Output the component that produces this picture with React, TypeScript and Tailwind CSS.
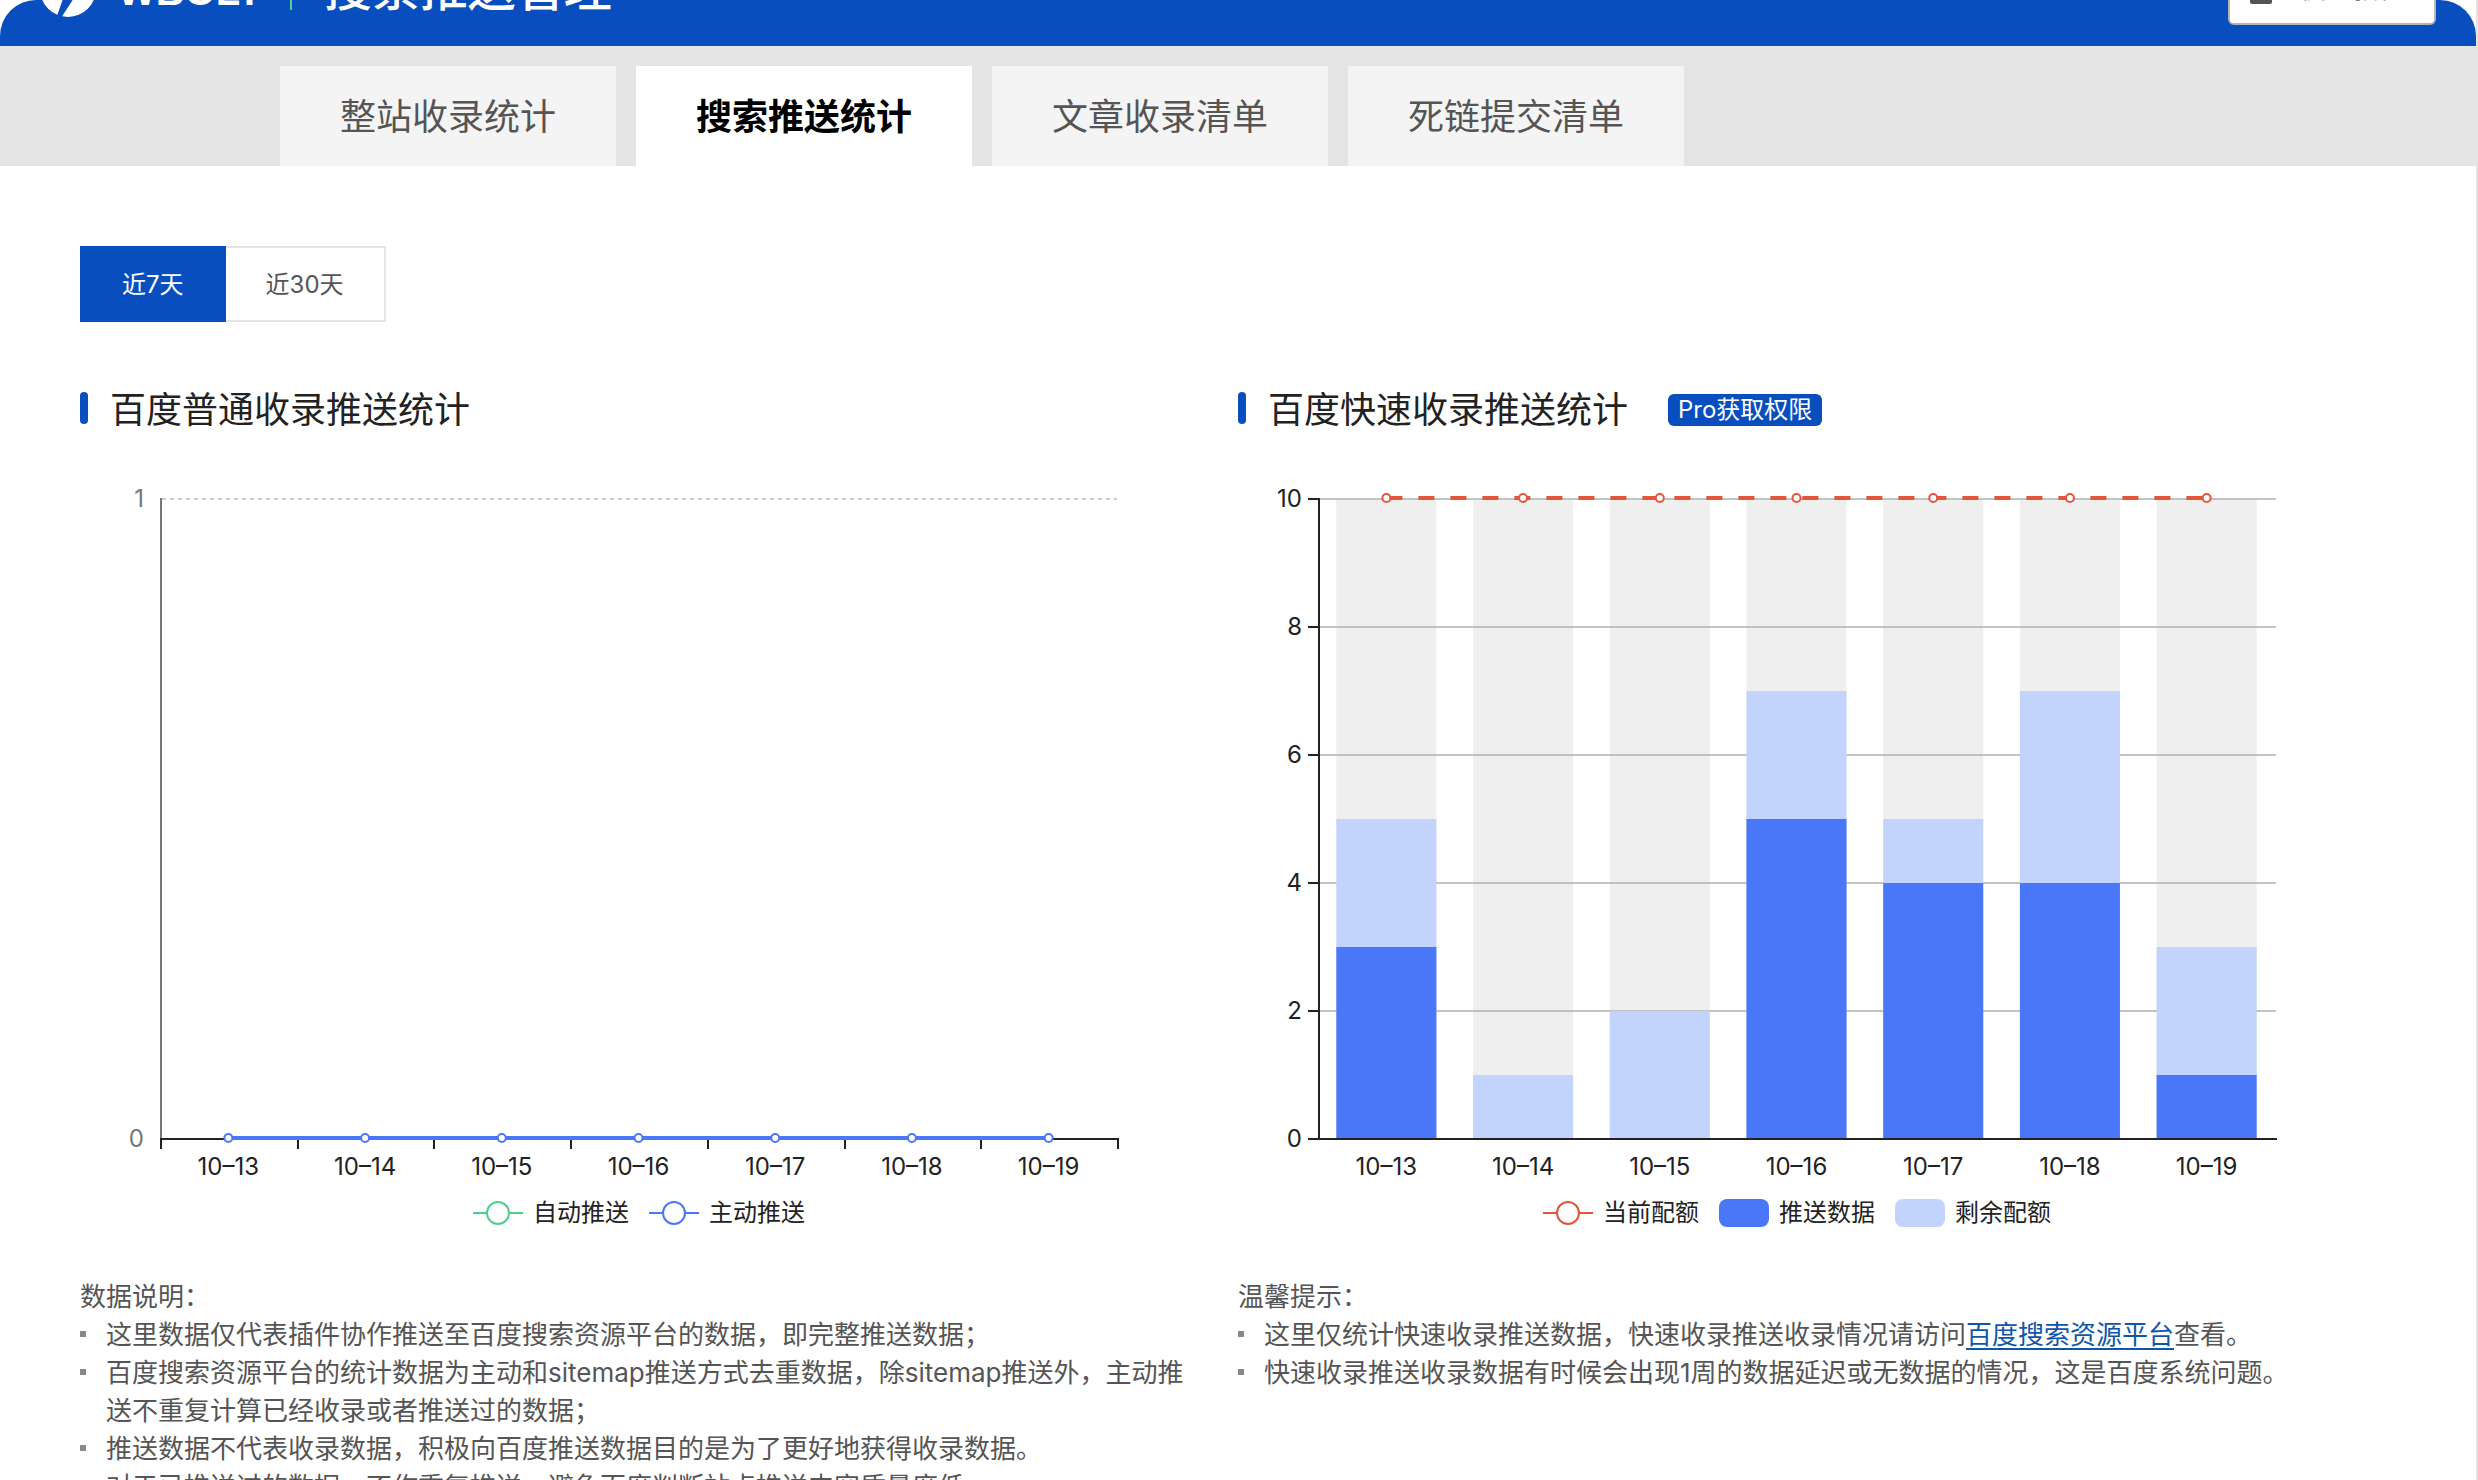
import type { ReactNode } from "react";

const days = ["10–13", "10–14", "10–15", "10–16", "10–17", "10–18", "10–19"];

const quota = [
  { pushed: 3, total: 5 },
  { pushed: 0, total: 1 },
  { pushed: 0, total: 2 },
  { pushed: 5, total: 7 },
  { pushed: 4, total: 5 },
  { pushed: 4, total: 7 },
  { pushed: 1, total: 3 },
];

// Plot area shared by both charts
const LEFT = 81;
const RIGHT = 1038;
const TOP = 41;
const BOTTOM = 681;
const STEP = (RIGHT - LEFT) / days.length;
const BAR = 100;

const centerX = (i: number) => LEFT + STEP * (i + 0.5) - 1;
const valueY = (v: number) => BOTTOM - ((BOTTOM - TOP) * v) / 10;

export default function App() {
  return (
    <div className="h-screen overflow-hidden bg-white border-r-2 border-[#e4e4e4] font-['Inter','Noto_Sans_CJK_SC',sans-serif] text-[#555]">
      {/* Header */}
      <header className="flex items-end justify-between h-[46px] overflow-hidden rounded-t-[36px] bg-[#084ebf] pl-10 pr-10">
        <div className="flex items-center shrink-0 h-[114px]">
          <Logo />
          <span className="ml-[22px] pt-1 font-['Liberation_Sans',sans-serif] font-bold text-[40px] leading-[48px] text-white">
            WBOLT
          </span>
          <span className="ml-7 w-[2px] h-[42px] bg-[#52d08c]" />
          <h1 className="ml-8 text-5xl leading-[48px] font-medium text-white">
            搜索推送管理
          </h1>
        </div>
        <div className="flex items-center shrink-0 h-[114px]">
          <button className="flex items-center gap-7 w-[208px] h-[72px] pl-5 pb-[2px] rounded-md border-2 border-[#b4b4b4] bg-white text-[26px] whitespace-nowrap">
            <svg width="22" height="32" viewBox="0 0 22 32" className="shrink-0" aria-hidden="true">
              <rect width="22" height="32" rx="2" fill="#555" />
            </svg>
            使用教程
          </button>
        </div>
      </header>

      {/* Tabs */}
      <nav className="flex items-end gap-5 h-[120px] pl-[280px] -mr-[2px] bg-[#e4e4e4]">
        <Tab>整站收录统计</Tab>
        <Tab active>搜索推送统计</Tab>
        <Tab>文章收录清单</Tab>
        <Tab>死链提交清单</Tab>
      </nav>

      <main className="px-20 pt-20">
        {/* Range switch */}
        <div className="flex text-2xl">
          <button className="h-[76px] px-[42px] pt-[2px] bg-[#084ebf] text-white">近7天</button>
          <button className="h-[76px] px-10 pt-[2px] border-2 border-l-0 border-[#e5e5e5]">
            近30天
          </button>
        </div>

        <div className="grid grid-cols-2 mt-16">
          <section className="pr-10">
            <Heading>百度普通收录推送统计</Heading>
            <PushChart />
            <div className="flex justify-center gap-5 mt-[10px]">
              <Legend icon={<LineMark color="#4dd08f" />}>自动推送</Legend>
              <Legend icon={<LineMark color="#4a77f7" />}>主动推送</Legend>
            </div>
            <Notes title="数据说明：">
              <Note>这里数据仅代表插件协作推送至百度搜索资源平台的数据，即完整推送数据；</Note>
              <Note>
                百度搜索资源平台的统计数据为主动和sitemap推送方式去重数据，除sitemap推送外，主动推送不重复计算已经收录或者推送过的数据；
              </Note>
              <Note>推送数据不代表收录数据，积极向百度推送数据目的是为了更好地获得收录数据。</Note>
              <Note>对于已推送过的数据，不作重复推送，避免百度判断站点推送内容质量度低。</Note>
            </Notes>
          </section>

          <section className="pr-10">
            <Heading badge="Pro获取权限">百度快速收录推送统计</Heading>
            <QuotaChart />
            <div className="flex justify-center gap-5 mt-[10px]">
              <Legend icon={<LineMark color="#e4553b" />}>当前配额</Legend>
              <Legend icon={<span className="w-[50px] h-7 rounded-lg bg-[#4a77f7]" />}>
                推送数据
              </Legend>
              <Legend icon={<span className="w-[50px] h-7 rounded-lg bg-[#c2d3fc]" />}>
                剩余配额
              </Legend>
            </div>
            <Notes title="温馨提示：">
              <Note>
                这里仅统计快速收录推送数据，快速收录推送收录情况请访问
                <a href="#baidu" className="text-[#0f56ab] underline underline-offset-4 decoration-2">
                  百度搜索资源平台
                </a>
                查看。
              </Note>
              <Note>快速收录推送收录数据有时候会出现1周的数据延迟或无数据的情况，这是百度系统问题。</Note>
            </Notes>
          </section>
        </div>
      </main>
    </div>
  );
}

function Logo() {
  return (
    <svg width="56" height="56" viewBox="0 0 56 56" className="shrink-0" aria-hidden="true">
      <circle cx="28" cy="28" r="28" fill="#fff" />
      <path d="M34 2 14 32h11l-8 23 4 2 22-34H30z" fill="#084ebf" />
    </svg>
  );
}

function Tab({ active, children }: { active?: boolean; children: ReactNode }) {
  return (
    <button
      className={
        active
          ? "w-[336px] h-[100px] pt-[2px] bg-white text-4xl font-bold text-black"
          : "w-[336px] h-[100px] pt-[2px] bg-[#f4f4f4] text-4xl"
      }
    >
      {children}
    </button>
  );
}

function Heading({ badge, children }: { badge?: string; children: ReactNode }) {
  return (
    <div className="flex items-center h-12">
      <span className="w-2 h-8 mb-1 rounded bg-[#084ebf]" />
      <h2 className="ml-[22px] text-4xl leading-[48px] text-[#222]">{children}</h2>
      {badge && (
        <span className="ml-10 h-8 px-[10px] rounded-md bg-[#084ebf] text-2xl leading-8 text-white">
          {badge}
        </span>
      )}
    </div>
  );
}

function Legend({ icon, children }: { icon: ReactNode; children: ReactNode }) {
  return (
    <span className="flex items-center gap-[10px] h-7 text-2xl leading-7 text-[#222]">
      {icon}
      {children}
    </span>
  );
}

function LineMark({ color }: { color: string }) {
  return (
    <svg width="50" height="28" viewBox="0 0 50 28" aria-hidden="true">
      <path d="M0 14h50" stroke={color} strokeWidth="2" />
      <circle cx="25" cy="14" r="11" fill="#fff" stroke={color} strokeWidth="2" />
    </svg>
  );
}

function Notes({ title, children }: { title: string; children: ReactNode }) {
  return (
    <div className="mt-[51px] text-[26px] leading-[38px]">
      <p>{title}</p>
      <ul>{children}</ul>
    </div>
  );
}

function Note({ children }: { children: ReactNode }) {
  return (
    <li className="flex gap-5">
      <span className="shrink-0 w-[6px] h-[6px] mt-[15px] bg-[#888]" />
      <span>{children}</span>
    </li>
  );
}

function DayLabels() {
  return (
    <g fill="#222" textAnchor="middle">
      {days.map((day, i) => (
        <text key={day} x={centerX(i)} y={717}>
          {day}
        </text>
      ))}
    </g>
  );
}

function PushChart() {
  return (
    <svg viewBox="0 0 1118 731" className="block w-full mt-6 text-2xl" role="img" aria-label="百度普通收录推送统计">
      <g fill="#777" textAnchor="end">
        <text x={64} y={TOP + 8}>1</text>
        <text x={64} y={BOTTOM + 8}>0</text>
      </g>
      <path d={`M${LEFT + 1} ${TOP}H${RIGHT - 1}`} stroke="#ccc" strokeWidth="2" strokeDasharray="4 4" />
      <path d={`M${LEFT} ${TOP - 1}V${BOTTOM}`} stroke="#777" strokeWidth="2" />
      <path d={`M${LEFT - 1} ${BOTTOM}H${RIGHT + 1}`} stroke="#222" strokeWidth="2" />
      {Array.from({ length: 8 }, (_, i) => {
        const x = Math.round(LEFT + STEP * i);
        return <path key={i} d={`M${x} ${BOTTOM}v10`} stroke="#222" strokeWidth="2" />;
      })}
      <path d={`M${centerX(0)} ${BOTTOM - 1}H${centerX(6)}`} stroke="#4a77f7" strokeWidth="4" />
      {days.map((day, i) => (
        <circle key={day} cx={centerX(i)} cy={BOTTOM - 1} r="4" fill="#fff" stroke="#4a77f7" strokeWidth="2" />
      ))}
      <DayLabels />
    </svg>
  );
}

function QuotaChart() {
  return (
    <svg viewBox="0 0 1118 731" className="block w-full mt-6 text-2xl" role="img" aria-label="百度快速收录推送统计">
      {[0, 2, 4, 6, 8, 10].map((v) => (
        <g key={v}>
          <path d={`M${LEFT} ${valueY(v)}H${RIGHT}`} stroke="#c4c4c4" strokeWidth="2" />
          <path d={`M${LEFT - 11} ${valueY(v)}h11`} stroke="#222" strokeWidth="2" />
          <text x={64} y={valueY(v) + 8} fill="#222" textAnchor="end">
            {v}
          </text>
        </g>
      ))}
      {quota.map(({ pushed, total }, i) => {
        const x = centerX(i) - BAR / 2;
        return (
          <g key={days[i]}>
            <rect x={x} y={TOP} width={BAR} height={BOTTOM - TOP} fill="#b4b4b4" fillOpacity="0.22" />
            <rect x={x} y={valueY(total)} width={BAR} height={BOTTOM - valueY(total)} fill="#c2d3fc" />
            <rect x={x} y={valueY(pushed)} width={BAR} height={BOTTOM - valueY(pushed)} fill="#4a77f7" />
          </g>
        );
      })}
      <path d={`M${LEFT} ${TOP - 1}V${BOTTOM}`} stroke="#222" strokeWidth="2" />
      <path d={`M${LEFT - 1} ${BOTTOM}H${RIGHT + 1}`} stroke="#222" strokeWidth="2" />
      <path
        d={`M${centerX(0)} ${TOP - 1}H${centerX(6)}`}
        stroke="#e4553b"
        strokeWidth="4"
        strokeDasharray="16 16"
      />
      {days.map((day, i) => (
        <circle key={day} cx={centerX(i)} cy={TOP - 1} r="4" fill="#fff" stroke="#e4553b" strokeWidth="2" />
      ))}
      <DayLabels />
    </svg>
  );
}
